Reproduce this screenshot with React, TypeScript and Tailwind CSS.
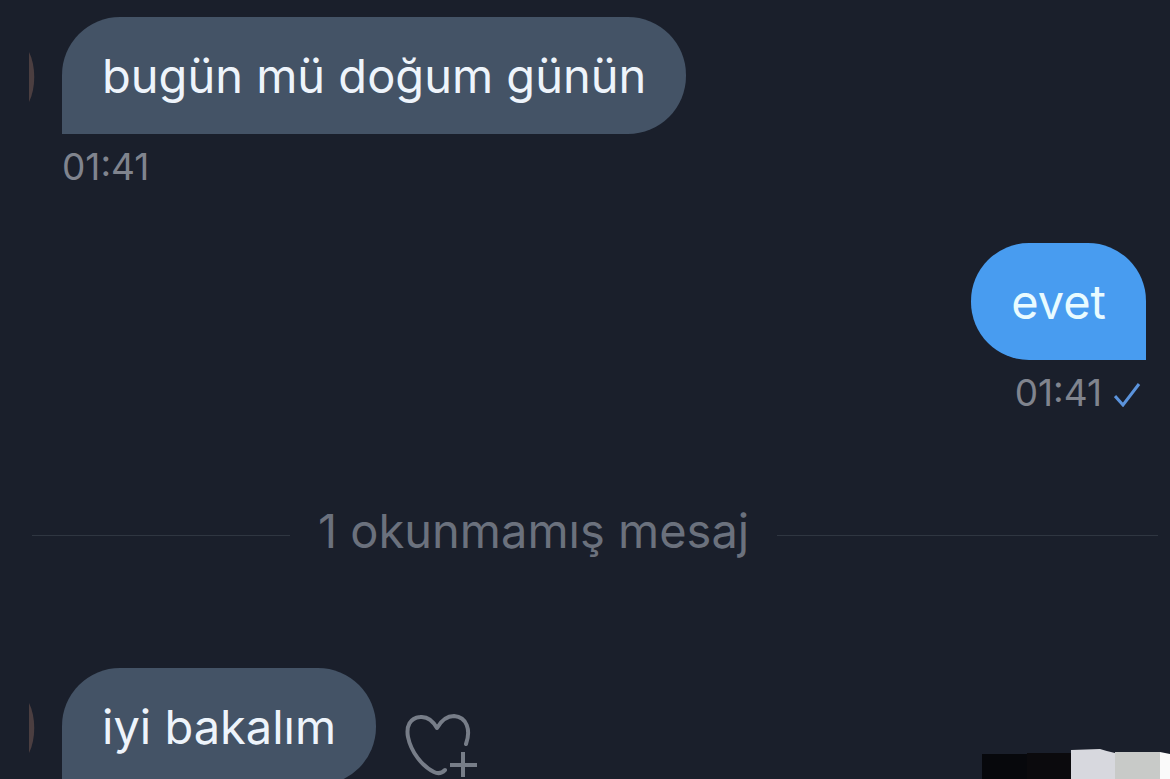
import React from 'react';
import { clsx } from 'clsx';

interface MessageProps {
  text: string;
  time?: string;
  sent?: boolean;
  reactable?: boolean;
}

const AvatarEdge = () => (
  <svg className="w-2 h-14 shrink-0" viewBox="0 0 8 56" aria-hidden="true">
    <path d="M1 4 C8 18 8 40 1 54 Z" fill="#4b3e40" />
  </svg>
);

const CheckIcon = () => (
  <svg className="w-7 h-7" viewBox="0 0 28 28" fill="none" stroke="#5b93dc" strokeWidth="3" role="img" aria-label="Görüldü">
    <path d="M1 17 L9 26 L25 5" />
  </svg>
);

const HeartPlusIcon = () => (
  <svg className="w-20 h-16" viewBox="0 0 80 64" fill="none" stroke="#777d88" strokeWidth="4" strokeLinecap="round" strokeLinejoin="round">
    <path d="M62 31 C67 17 63 4 50 3 C42 3 37 8 33 15 C29 8 24 3 16 4 C6 5 2 13 4 24 C7 39 18 53 30 59 C34 61 38 60 41 57" />
    <path d="M59 39 V64 M46 52 H73" strokeLinecap="butt" />
  </svg>
);

const Message: React.FC<MessageProps> = ({ text, time, sent, reactable }) => (
  <div className={clsx('flex flex-col', sent ? 'items-end pr-6' : 'items-start pl-7')}>
    <div className="flex items-center">
      {!sent && (
        <div className="w-[34px]">
          <AvatarEdge />
        </div>
      )}
      <p
        className={clsx(
          'rounded-[58px] px-10 py-7 text-[47px] leading-[61px]',
          sent ? 'rounded-br-none bg-[#489cf0] text-[#e9fbff]' : 'rounded-bl-none bg-[#445366] text-[#eef4fb]',
        )}
      >
        {text}
      </p>
      {reactable && (
        <button type="button" aria-label="Tepki ekle" className="ml-7 mt-9">
          <HeartPlusIcon />
        </button>
      )}
    </div>
    {time && (
      <div className={clsx('mt-2 flex items-center gap-3 text-[37px] leading-[50px] text-[#80848e]', sent ? 'pr-1' : 'pl-[34px]')}>
        <time>{time}</time>
        {sent && <CheckIcon />}
      </div>
    )}
  </div>
);

const UnreadDivider = ({ label }: { label: string }) => (
  <div className="flex items-center gap-7 pl-8 pr-3 text-[47px] leading-[56px] text-[#6b717d]">
    <span className="mt-2 h-px w-[258px] bg-[#2f3641]" />
    <span>{label}</span>
    <span className="mt-2 h-px flex-1 bg-[#2f3641]" />
  </div>
);

const App = () => (
  <main className="relative h-screen overflow-hidden bg-[#1a1f2b] pt-[17px] font-['Inter',sans-serif]">
    <Message text="bugün mü doğum günün" time="01:41" />
    <div className="mt-[51px]">
      <Message text="evet" time="01:41" sent />
    </div>
    <div className="mt-[85px]">
      <UnreadDivider label="1 okunmamış mesaj" />
    </div>
    <div className="mt-[109px]">
      <Message text="iyi bakalım" reactable />
    </div>
    <svg className="absolute bottom-0 right-0 h-[30px] w-[188px]" viewBox="0 0 188 30" aria-hidden="true">
      <path d="M0 5 H45 V30 H0 Z" fill="#07080c" />
      <path d="M45 4 H89 V30 H45 Z" fill="#0b0a0d" />
      <path d="M89 1 L118 0 Q124 2 133 4 V30 H89 Z" fill="#d7d8de" />
      <path d="M133 3 H178 V30 H133 Z" fill="#c8cac8" />
      <path d="M178 3 L188 5 V30 H178 Z" fill="#fafafa" />
    </svg>
  </main>
);

export default App;
